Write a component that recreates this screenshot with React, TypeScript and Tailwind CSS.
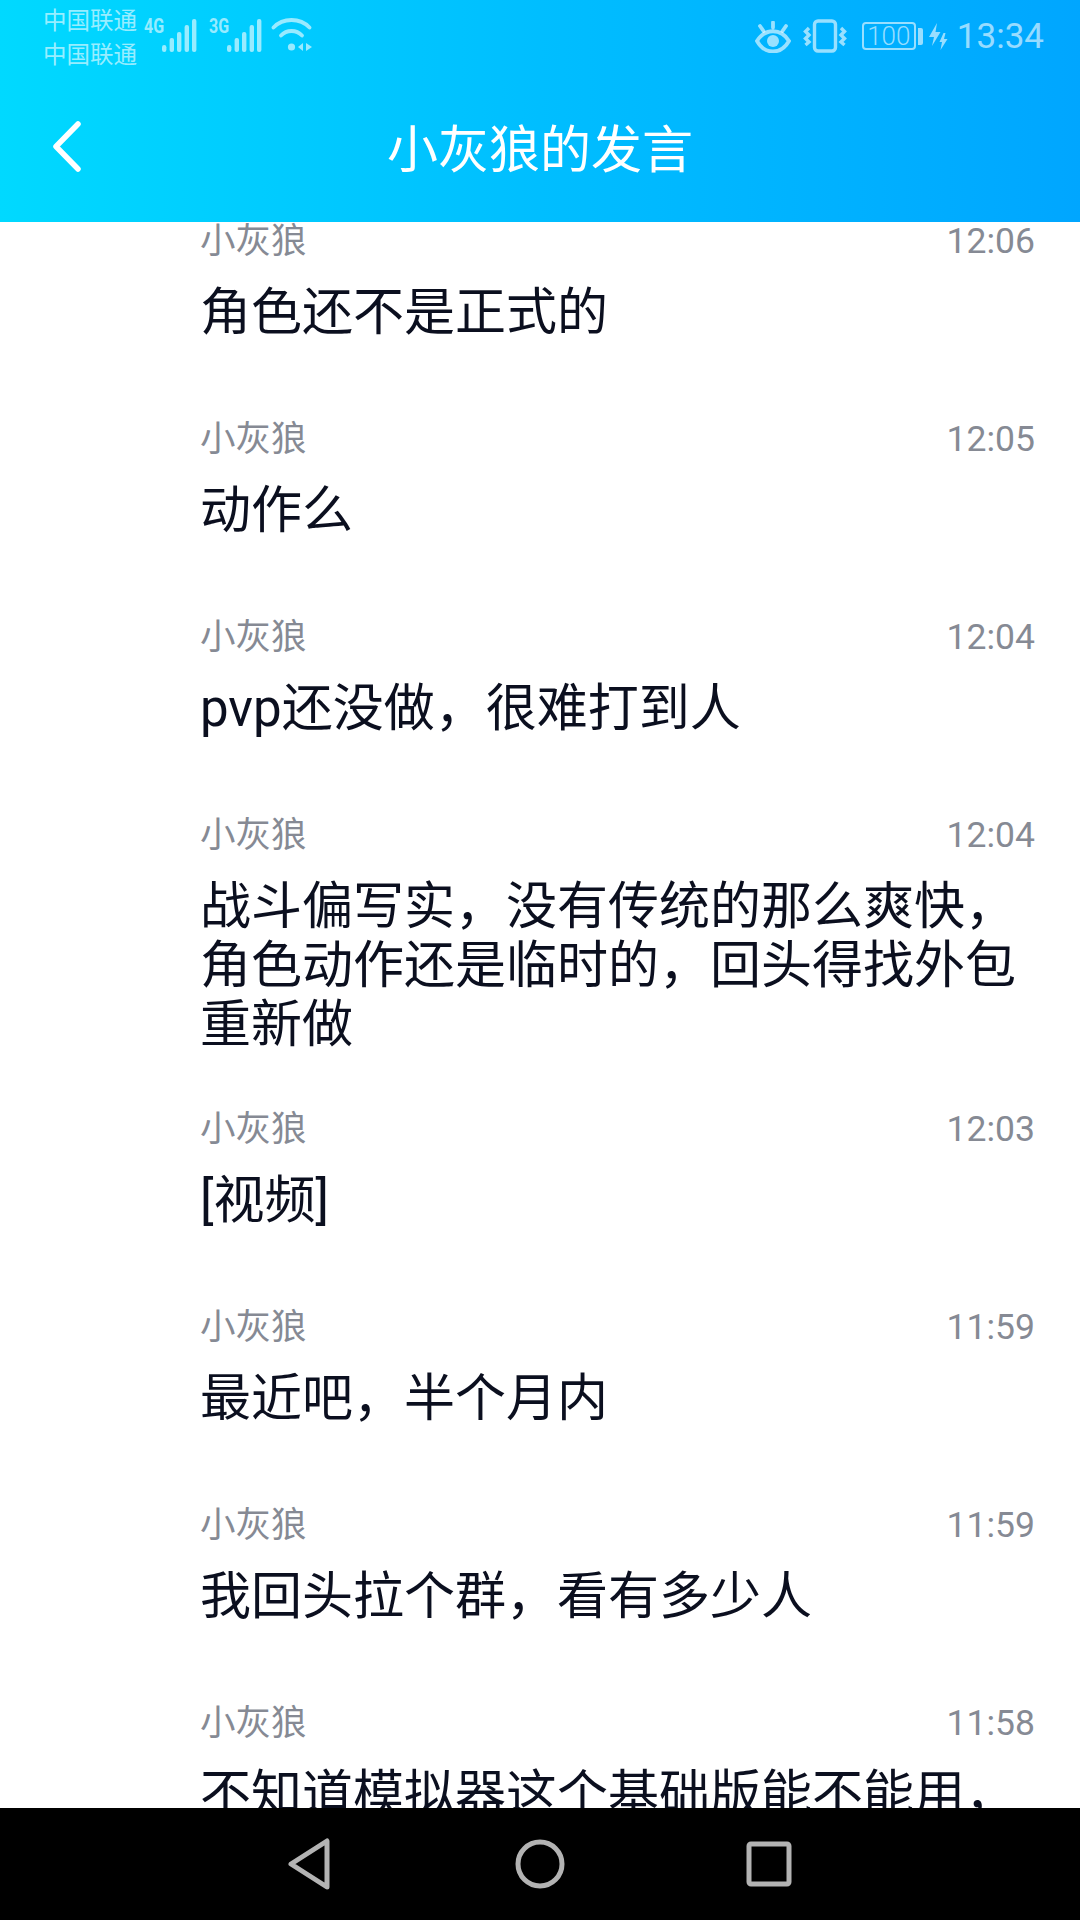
import React from "react";

const rows: { time: string; text: string }[] = [
  { time: "12:06", text: "角色还不是正式的" },
  { time: "12:05", text: "动作么" },
  { time: "12:04", text: "pvp还没做，很难打到人" },
  { time: "12:04", text: "战斗偏写实，没有传统的那么爽快，角色动作还是临时的，回头得找外包重新做" },
  { time: "12:03", text: "[视频]" },
  { time: "11:59", text: "最近吧，半个月内" },
  { time: "11:59", text: "我回头拉个群，看有多少人" },
  { time: "11:58", text: "不知道模拟器这个基础版能不能用，" },
];

function Signal({ label }: { label: string }) {
  return (
    <div className="flex items-start">
      <span className="mt-[15px] w-[18px] origin-left scale-x-[0.8] text-[20px] leading-[22px] font-bold">
        {label}
      </span>
      <svg width="38" height="36" viewBox="0 0 38 36" className="mt-[18px]">
        <g fill="currentColor">
          <rect x="0" y="27" width="4.4" height="7" rx="2.2" />
          <rect x="7.6" y="20" width="4.4" height="14" rx="2" />
          <rect x="15" y="14" width="4.4" height="20" rx="2" />
          <rect x="22.6" y="7" width="4.4" height="27" rx="2" />
          <rect x="30" y="1" width="4.4" height="33" rx="2" />
        </g>
      </svg>
    </div>
  );
}

export default function App() {
  return (
    <div className="relative flex h-[1920px] w-[1080px] flex-col overflow-hidden bg-white font-['Roboto','Noto_Sans_CJK_SC',sans-serif]">
      <header className="h-[222px] shrink-0 bg-gradient-to-r from-[#00d9ff] via-[#00beff] to-[#00a6ff] text-white">
        <div className="flex h-[74px] items-start justify-between text-[#ffffff]/60">
          <div className="flex items-start">
            <div className="ml-[43px] mt-[5px] w-[101px] text-[23.5px] leading-[33.5px]">
              <div>中国联通</div>
              <div>中国联通</div>
            </div>
            <Signal label="4G" />
            <div className="ml-[9px]">
              <Signal label="3G" />
            </div>
            <svg width="42" height="36" viewBox="0 0 42 36" className="ml-[6px] mt-[18px]" fill="none" stroke="currentColor" strokeLinecap="round">
              <path d="M2.500 9.500C12 -0.500 29 -0.500 38.500 9.500" strokeWidth="3.8" />
              <path d="M10 17.500C15.500 11.500 25.500 11.500 31 17.500" strokeWidth="3.8" />
              <circle cx="20.500" cy="29" r="3.600" fill="currentColor" stroke="none" />
              <path d="M32 25v8l-5-4zM35 25v8l6-4z" fill="currentColor" stroke="none" />
            </svg>
          </div>
          <div className="mr-[36px] flex items-start">
            <svg width="36" height="32" viewBox="0 0 36 32" className="mt-[21px]" fill="none" stroke="currentColor" strokeWidth="3.800" strokeLinecap="round">
              <path d="M2 20C10 7 26 7 34 20C26 34 10 34 2 20Z" />
              <circle cx="18" cy="20" r="6" fill="currentColor" stroke="none" />
              <path d="M18 1.500V6.500M5 5L8.500 10M31 5L27.500 10" />
            </svg>
            <svg width="44" height="34" viewBox="0 0 44 34" className="ml-[12px] mt-[19px]" fill="none" stroke="currentColor">
              <rect x="11.500" y="2" width="21" height="30" rx="3.500" strokeWidth="3.400" />
              <path d="M6 9L2.500 12.500L6 16L2.500 19.500L6 23L2.500 26" strokeWidth="3.400" />
              <path d="M38 9L41.500 12.500L38 16L41.500 19.500L38 23L41.500 26" strokeWidth="3.400" />
            </svg>
            <div className="ml-[15px] mt-[22px] flex h-[28px] w-[54px] items-center justify-center rounded-[4px] border-2 border-white/60 text-[26px] leading-none font-light">
              100
            </div>
            <div className="ml-[2px] mt-[28px] h-[17px] w-[5px] rounded-r-[2px] bg-white/60" />
            <svg width="20" height="28" viewBox="0 0 20 28" className="ml-[5px] mt-[23px]" fill="currentColor">
              <path d="M9 0L1 14H6L4 23L12.500 9H7.500Z" />
              <path d="M15.500 10L11.500 19H14L12.500 27L19.500 16H16L17.500 10Z" />
            </svg>
            <div className="ml-[9px] mt-[17px] text-[35px] leading-[40px]">13:34</div>
          </div>
        </div>
        <div className="relative flex h-[148px] items-center justify-center">
          <svg width="40" height="60" viewBox="0 0 40 60" className="absolute left-[47px] top-[43px]" fill="none" stroke="#ffffff" strokeWidth="5.500" strokeLinecap="round" strokeLinejoin="round">
            <path d="M31 7L9 29.500L31 52" />
          </svg>
          <h1 className="mt-[5px] text-[51px] leading-[60px] font-normal">小灰狼的发言</h1>
        </div>
      </header>

      <main className="min-h-0 flex-1 overflow-hidden">
        <div className="-mt-[4px]">
          {rows.map((r, i) => (
            <div key={i} className="min-h-[198px] pb-[52px] pl-[200px] pr-[45px]">
              <div className="flex h-[48px] items-center justify-between text-[#868a94]">
                <span className="text-[35.500px]">小灰狼</span>
                <span className="text-[35.500px]">{r.time}</span>
              </div>
              <p className="mt-[17px] text-[51px] leading-[59px] text-[#0b0f1f]">{r.text}</p>
            </div>
          ))}
        </div>
      </main>

      <nav className="flex h-[112px] shrink-0 items-center justify-center bg-black pr-[2px]">
        <svg width="44" height="52" viewBox="0 0 44 52" fill="none" stroke="#b3b3b3" strokeWidth="5" strokeLinejoin="round">
          <path d="M40 3V49L4 26Z" />
        </svg>
        <svg width="50" height="50" viewBox="0 0 50 50" fill="none" stroke="#b3b3b3" strokeWidth="5" className="ml-[184px]">
          <circle cx="25" cy="25" r="22" />
        </svg>
        <svg width="46" height="46" viewBox="0 0 46 46" fill="none" stroke="#b3b3b3" strokeWidth="5" strokeLinejoin="round" className="ml-[181px]">
          <rect x="3" y="3" width="40" height="40" rx="2" />
        </svg>
      </nav>
    </div>
  );
}
